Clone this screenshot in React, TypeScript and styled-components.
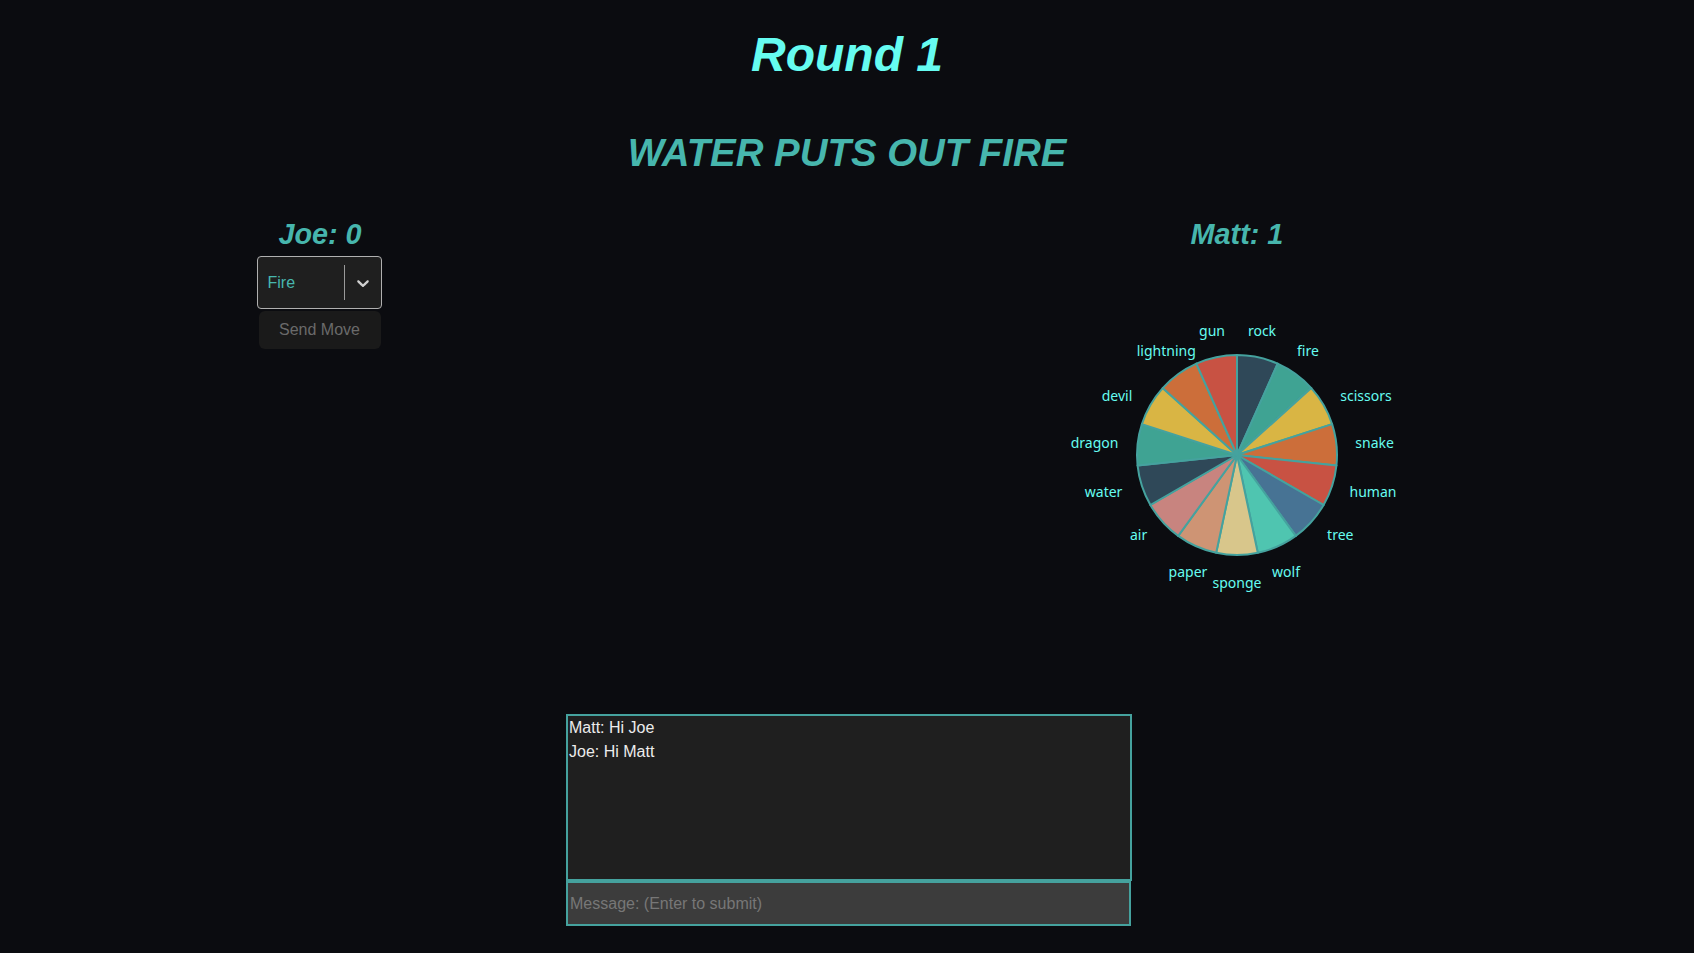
import React from "react";
import styled, { createGlobalStyle } from "styled-components";

const GlobalStyle = createGlobalStyle`
  html, body {
    margin: 0;
    padding: 0;
    background: #0b0c10;
  }
  body {
    font-family: "Liberation Sans", Arial, sans-serif;
    min-height: 953px;
  }
`;

const Page = styled.div`
  min-height: 953px;
  background: #0b0c10;
  display: flex;
  flex-direction: column;
  align-items: stretch;
`;

const Title = styled.h1`
  margin: 28px 0 0;
  font-size: 48px;
  line-height: 54px;
  font-style: italic;
  font-weight: 700;
  text-align: center;
  color: #66fcf1;
`;

const Outcome = styled.h2`
  margin: 49px 0 0;
  font-size: 38.4px;
  line-height: 43px;
  font-style: italic;
  font-weight: 700;
  text-align: center;
  color: #47b6ad;
`;

const Players = styled.div`
  margin-top: 44px;
  display: grid;
  grid-template-columns: 640px 1fr 400px;
  padding-right: 257px;
  align-items: start;
`;

const PlayerColumn = styled.div<{ $col: number }>`
  grid-column: ${(p) => p.$col};
  display: flex;
  flex-direction: column;
  align-items: center;
`;

const PlayerName = styled.h3`
  margin: 0;
  font-size: 28.8px;
  line-height: 32px;
  font-style: italic;
  font-weight: 700;
  color: #47b6ad;
`;

const MoveForm = styled.div`
  margin-top: 6px;
  margin-right: 2px;
  display: flex;
  flex-direction: column;
  align-items: center;
  gap: 2px;
`;

const SelectControl = styled.div`
  box-sizing: border-box;
  width: 125px;
  height: 53px;
  display: flex;
  align-items: center;
  background: #1f1f1f;
  border: 1px solid #b0b0b0;
  border-radius: 4px;
`;

const SelectValue = styled.div`
  flex: 1;
  padding: 2px 8px 2px 10px;
  font-size: 16px;
  color: #47b6ad;
`;

const Separator = styled.span`
  align-self: stretch;
  width: 1px;
  margin: 8px 0;
  background: #9a9a9a;
`;

const Indicator = styled.div`
  display: flex;
  padding: 8px;
  color: #d0d0d0;
`;

const SendButton = styled.button`
  width: 122px;
  height: 38px;
  margin-left: 1px;
  border: none;
  border-radius: 6px;
  background: #1a1a1a;
  color: #6a6a6a;
  font-family: "Liberation Sans", Arial, sans-serif;
  font-size: 16px;
  padding: 0;
`;

const Wheel = styled.svg`
  margin-top: 5px;
  display: block;
`;

const Label = styled.text`
  font-family: "Noto Sans", "Open Sans", sans-serif;
  font-size: 14px;
  fill: #66fcf1;
`;

const Chat = styled.div`
  margin: 59px 0 0 calc(50% - 281px);
  width: 566px;
  display: flex;
  flex-direction: column;
`;

const Messages = styled.div`
  box-sizing: border-box;
  height: 167px;
  border: 2px solid #45a29e;
  background: #1f1f1f;
  padding: 0 3px 0 1px;
`;

const Message = styled.div`
  font-size: 16px;
  line-height: 24px;
  color: #ececec;
`;

const MessageInput = styled.input`
  box-sizing: border-box;
  height: 45px;
  width: 565px;
  border: 2px solid #45a29e;
  background: #3c3c3c;
  padding: 1px 2px;
  font-family: "Liberation Sans", Arial, sans-serif;
  font-size: 16px;
  color: #ddd;
  outline: none;
  &::placeholder {
    color: #777;
  }
`;

type Slice = { name: string; color: string; lx: number; ly: number };

const slices: Slice[] = [
  { name: "rock", color: "#2f4858", lx: 225, ly: 75 },
  { name: "fire", color: "#3fa393", lx: 271, ly: 95 },
  { name: "scissors", color: "#d9b544", lx: 329, ly: 140 },
  { name: "snake", color: "#cc6e3a", lx: 337.6, ly: 187.3 },
  { name: "human", color: "#c85243", lx: 336, ly: 236.7 },
  { name: "tree", color: "#477394", lx: 303.3, ly: 279.7 },
  { name: "wolf", color: "#4fc5b0", lx: 249, ly: 316.7 },
  { name: "sponge", color: "#d8c68b", lx: 200, ly: 327.3 },
  { name: "paper", color: "#ce9474", lx: 151, ly: 316.7 },
  { name: "air", color: "#c8847f", lx: 101.6, ly: 279.7 },
  { name: "water", color: "#2f4858", lx: 66.6, ly: 236.7 },
  { name: "dragon", color: "#3fa393", lx: 57.6, ly: 187.3 },
  { name: "devil", color: "#d9b544", lx: 80, ly: 140 },
  { name: "lightning", color: "#cc6e3a", lx: 129.3, ly: 95 },
  { name: "gun", color: "#c85243", lx: 175, ly: 75 },
];

const CX = 200;
const CY = 200;
const R = 100;

function slicePath(i: number, n: number) {
  const a0 = ((i * 360) / n) * (Math.PI / 180);
  const a1 = (((i + 1) * 360) / n) * (Math.PI / 180);
  const x0 = CX + R * Math.sin(a0);
  const y0 = CY - R * Math.cos(a0);
  const x1 = CX + R * Math.sin(a1);
  const y1 = CY - R * Math.cos(a1);
  return `M${CX} ${CY} L${x0.toFixed(2)} ${y0.toFixed(2)} A${R} ${R} 0 0 1 ${x1.toFixed(2)} ${y1.toFixed(2)} Z`;
}

const MoveWheel = () => (
  <Wheel width={400} height={400} viewBox="0 0 400 400">
    {slices.map((s, i) => (
      <path
        key={s.name}
        d={slicePath(i, slices.length)}
        fill={s.color}
        stroke="#45a29e"
        strokeWidth={2}
        strokeLinejoin="round"
      />
    ))}
    {slices.map((s) => (
      <Label key={s.name + "-l"} x={s.lx} y={s.ly} textAnchor="middle" dominantBaseline="central">
        {s.name}
      </Label>
    ))}
  </Wheel>
);

export default function App() {
  return (
    <>
      <GlobalStyle />
      <Page>
        <Title>Round 1</Title>
        <Outcome>WATER PUTS OUT FIRE</Outcome>
        <Players>
          <PlayerColumn $col={1}>
            <PlayerName>Joe: 0</PlayerName>
            <MoveForm>
              <SelectControl>
                <SelectValue>Fire</SelectValue>
                <Separator />
                <Indicator>
                  <svg width="20" height="20" viewBox="0 0 20 20" fill="currentColor">
                    <path d="M4.516 7.548c0.436-0.446 1.043-0.481 1.576 0l3.908 3.747 3.908-3.747c0.533-0.481 1.141-0.446 1.574 0 0.436 0.445 0.408 1.197 0 1.615-0.406 0.418-4.695 4.502-4.695 4.502-0.217 0.223-0.502 0.335-0.787 0.335s-0.57-0.112-0.789-0.335c0 0-4.287-4.084-4.695-4.502s-0.436-1.17 0-1.615z" />
                  </svg>
                </Indicator>
              </SelectControl>
              <SendButton disabled>Send Move</SendButton>
            </MoveForm>
          </PlayerColumn>
          <PlayerColumn $col={3}>
            <PlayerName>Matt: 1</PlayerName>
            <MoveWheel />
          </PlayerColumn>
        </Players>
        <Chat>
          <Messages>
            <Message>Matt: Hi Joe</Message>
            <Message>Joe: Hi Matt</Message>
          </Messages>
          <MessageInput placeholder="Message: (Enter to submit)" />
        </Chat>
      </Page>
    </>
  );
}
